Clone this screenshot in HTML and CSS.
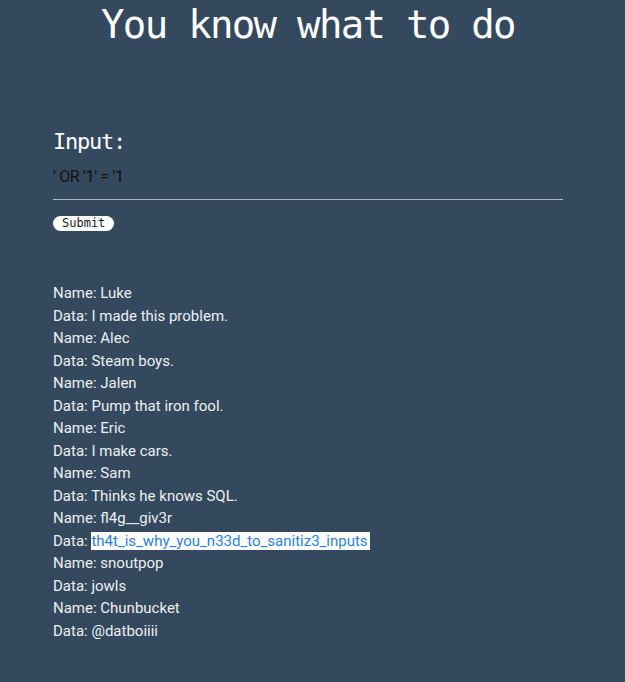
FILE: index.html
```html
<!DOCTYPE html>
<html lang="en">
<head>
<meta charset="utf-8">
<title>You know what to do</title>
<link rel="stylesheet" href="styles.css">
</head>
<body>
<h1 class="title">You know what to do</h1>
<main class="container">
  <form class="query-form">
    <label class="field-label" for="q">Input:</label>
    <input class="field-input" id="q" type="text" value="' OR '1' = '1">
    <button class="submit-btn" type="button">Submit</button>
  </form>
  <div class="results">
    <div class="row">Name: Luke</div>
    <div class="row">Data: I made this problem.</div>
    <div class="row">Name: Alec</div>
    <div class="row">Data: Steam boys.</div>
    <div class="row">Name: Jalen</div>
    <div class="row">Data: Pump that iron fool.</div>
    <div class="row">Name: Eric</div>
    <div class="row">Data: I make cars.</div>
    <div class="row">Name: Sam</div>
    <div class="row">Data: Thinks he knows SQL.</div>
    <div class="row">Name: fl4g__giv3r</div>
    <div class="row">Data: <span class="flag">th4t_is_why_you_n33d_to_sanitiz3_inputs </span></div>
    <div class="row">Name: snoutpop</div>
    <div class="row">Data: jowls</div>
    <div class="row">Name: Chunbucket</div>
    <div class="row">Data: @datboiiii</div>
  </div>
</main>
</body>
</html>
```
FILE: styles.css
```css
html, body {
  margin: 0;
  padding: 0;
}

body {
  background: #34495e;
  color: #ecf0f1;
  font-family: Roboto, "Liberation Sans", sans-serif;
}

.title {
  margin: 0;
  padding-top: 2px;
  width: 510px;
  margin-left: 53px;
  text-align: center;
  font-family: "DejaVu Sans Mono", monospace;
  font-weight: normal;
  font-size: 39px;
  line-height: 46px;
  letter-spacing: -1.7px;
  color: #ffffff;
}

.container {
  width: 510px;
  margin-left: 53px;
}

.query-form {
  display: flex;
  flex-direction: column;
  align-items: flex-start;
  margin: 0;
  padding-top: 81px;
}

.field-label {
  display: block;
  font-family: "DejaVu Sans Mono", monospace;
  font-size: 22px;
  line-height: 26px;
  letter-spacing: -1.25px;
  color: #ffffff;
}

.field-input {
  display: block;
  box-sizing: border-box;
  width: 510px;
  margin: 6px 0 0;
  padding: 6px 0 13px;
  border: none;
  border-bottom: 1px solid #b3b8bd;
  background: transparent;
  font-family: Roboto, "Liberation Sans", sans-serif;
  font-size: 16px;
  line-height: 19px;
  height: 39px;
  color: #111111;
  outline: none;
  letter-spacing: -0.3px;
}

.submit-btn {
  margin-top: 16px;
  height: 15px;
  padding: 0 9px;
  border: none;
  border-radius: 8px;
  background: #ffffff;
  color: #1b1b1b;
  font-family: "DejaVu Sans Mono", monospace;
  font-size: 12px;
  line-height: 15px;
}

.results {
  margin-top: 51px;
  font-size: 15px;
  line-height: 22.5px;
  color: #ecf0f1;
}

.flag {
  background: #ffffff;
  color: #2b7fdf;
  padding-right: 2px;
}
```
